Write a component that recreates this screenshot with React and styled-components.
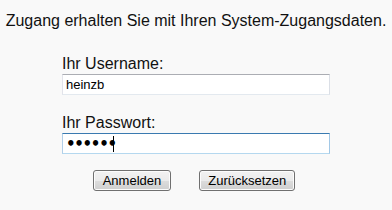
import React from "react";
import styled, { createGlobalStyle } from "styled-components";

const Global = createGlobalStyle`
  html, body {
    margin: 0;
    padding: 0;
    background: #f9f9f9;
  }
  body {
    font-family: "Liberation Sans", Arial, sans-serif;
    color: #111;
  }
`;

const Page = styled.div`
  width: 392px;
  height: 210px;
  display: flex;
  flex-direction: column;
  align-items: center;
  padding-top: 12px;
  box-sizing: border-box;
`;

const Intro = styled.p`
  margin: 0;
  font-size: 16px;
  line-height: 18px;
  text-align: center;
`;

const Form = styled.form`
  width: 268px;
  margin-top: 25px;
  display: flex;
  flex-direction: column;
`;

const Field = styled.label`
  display: flex;
  flex-direction: column;
  gap: 1px;
  margin-bottom: ${(p) => p.$gap}px;
  font-size: 16px;
  line-height: 18px;
`;

const InputWrap = styled.span`
  position: relative;
  display: block;
`;

const Input = styled.input`
  box-sizing: border-box;
  display: block;
  width: 268px;
  height: 21px;
  margin: 0;
  padding: 0 3px;
  font-family: ${(p) =>
    p.type === "password" ? '"DejaVu Sans", Verdana, sans-serif' : '"Liberation Sans", Arial, sans-serif'};
  font-size: ${(p) => (p.type === "password" ? 15 : 13)}px;
  font-weight: ${(p) => (p.type === "password" ? 700 : 400)};
  letter-spacing: ${(p) => (p.type === "password" ? "-1.3px" : "0")};
  color: #000;
  background: #fff;
  border: 1px solid;
  border-color: ${(p) =>
    p.$focused ? "#3a7ab0 #a2c8e6 #b5d8ef #b2cfe8" : "#abadb3 #dbdfe6 #e3e9ef #e2e3ea"};
  outline: none;
  caret-color: transparent;
`;

const Caret = styled.span`
  position: absolute;
  left: ${(p) => p.$x}px;
  top: 3px;
  width: 1px;
  height: 16px;
  background: #000;
`;

const Buttons = styled.div`
  display: flex;
  justify-content: center;
  gap: 28px;
  margin-right: 4px;
`;

const Button = styled.button`
  box-sizing: border-box;
  height: 21px;
  padding: 0 ${(p) => p.$pad}px;
  font-family: "Liberation Sans", Tahoma, sans-serif;
  font-size: 13px;
  color: #000;
  border: 1px solid #707070;
  border-radius: 3px;
  background: linear-gradient(#f2f2f2 0%, #ebebeb 50%, #dddddd 51%, #cfcfcf 100%);
  box-shadow: inset 0 0 0 1px #fcfcfc;
`;

export default function App() {
  return (
    <>
      <Global />
      <Page>
        <Intro>Zugang erhalten Sie mit Ihren System-Zugangsdaten.</Intro>
        <Form onSubmit={(e) => e.preventDefault()}>
          <Field $gap={19}>
            Ihr Username:
            <InputWrap>
              <Input type="text" defaultValue="heinzb" />
            </InputWrap>
          </Field>
          <Field $gap={16}>
            Ihr Passwort:
            <InputWrap>
              <Input type="password" defaultValue="secret" $focused />
              <Caret $x={51} />
            </InputWrap>
          </Field>
          <Buttons>
            <Button type="submit" $pad={9}>Anmelden</Button>
            <Button type="reset" $pad={8}>Zurücksetzen</Button>
          </Buttons>
        </Form>
      </Page>
    </>
  );
}
